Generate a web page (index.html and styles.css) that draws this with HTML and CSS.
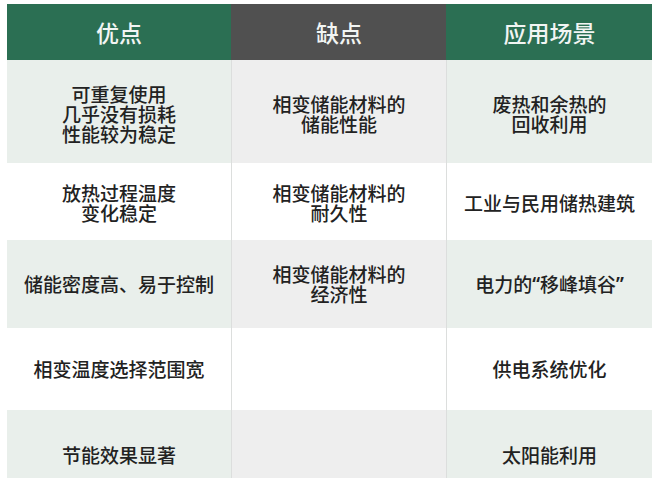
FILE: index.html
```html
<!DOCTYPE html>
<html lang="zh-CN">
<head>
<meta charset="utf-8">
<link rel="stylesheet" href="styles.css">
</head>
<body>
<div class="table">
  <div class="cell head green">优点</div>
  <div class="cell head gray sep">缺点</div>
  <div class="cell head green sep">应用场景</div>

  <div class="cell r1 tg">可重复使用<br>几乎没有损耗<br>性能较为稳定</div>
  <div class="cell r1 tx sep">相变储能材料的<br>储能性能</div>
  <div class="cell r1 tg sep">废热和余热的<br>回收利用</div>

  <div class="cell r2">放热过程温度<br>变化稳定</div>
  <div class="cell r2 sep">相变储能材料的<br>耐久性</div>
  <div class="cell r2 sep">工业与民用储热建筑</div>

  <div class="cell r3 tg">储能密度高、易于控制</div>
  <div class="cell r3 tx sep">相变储能材料的<br>经济性</div>
  <div class="cell r3 tg sep">电力的<span class="q">“</span>移峰填谷<span class="q">”</span></div>

  <div class="cell r4">相变温度选择范围宽</div>
  <div class="cell r4 sep"></div>
  <div class="cell r4 sep">供电系统优化</div>

  <div class="cell r5 tg">节能效果显著</div>
  <div class="cell r5 tx sep"></div>
  <div class="cell r5 tg sep">太阳能利用</div>
</div>
</body>
</html>
```

FILE: styles.css
```css
html, body {
  margin: 0;
  padding: 0;
  background: #ffffff;
  overflow: hidden;
}
body {
  width: 660px;
  height: 478px;
  font-family: "Noto Sans CJK SC", "Noto Sans", sans-serif;
}
.table {
  margin: 4px 0 0 7px;
  width: 645px;
  display: grid;
  grid-template-columns: 224px 215px 206px;
  grid-template-rows: 56px 103px 77px 88px 82px 90px;
}
.cell {
  box-sizing: border-box;
  display: flex;
  align-items: center;
  justify-content: center;
  text-align: center;
  font-size: 19px;
  font-weight: 500;
  line-height: 20px;
  color: #222222;
  background: #ffffff;
}
.q {
  font-family: "Noto Sans", sans-serif;
  font-weight: 600;
}
.sep {
  border-left: 1px solid #dcdedd;
}
.head {
  font-size: 23px;
  font-weight: 500;
  color: #f2f5f3;
}
.head.sep {
  border-left: 1px solid transparent;
}
.green {
  background: #2b6f53;
}
.gray {
  background: #505050;
}
.tg {
  background: #e9efeb;
}
.tx {
  background: #eeeeee;
}
.r1 {
  padding-top: 4px;
}
.r2 {
  padding-top: 2px;
}
```
